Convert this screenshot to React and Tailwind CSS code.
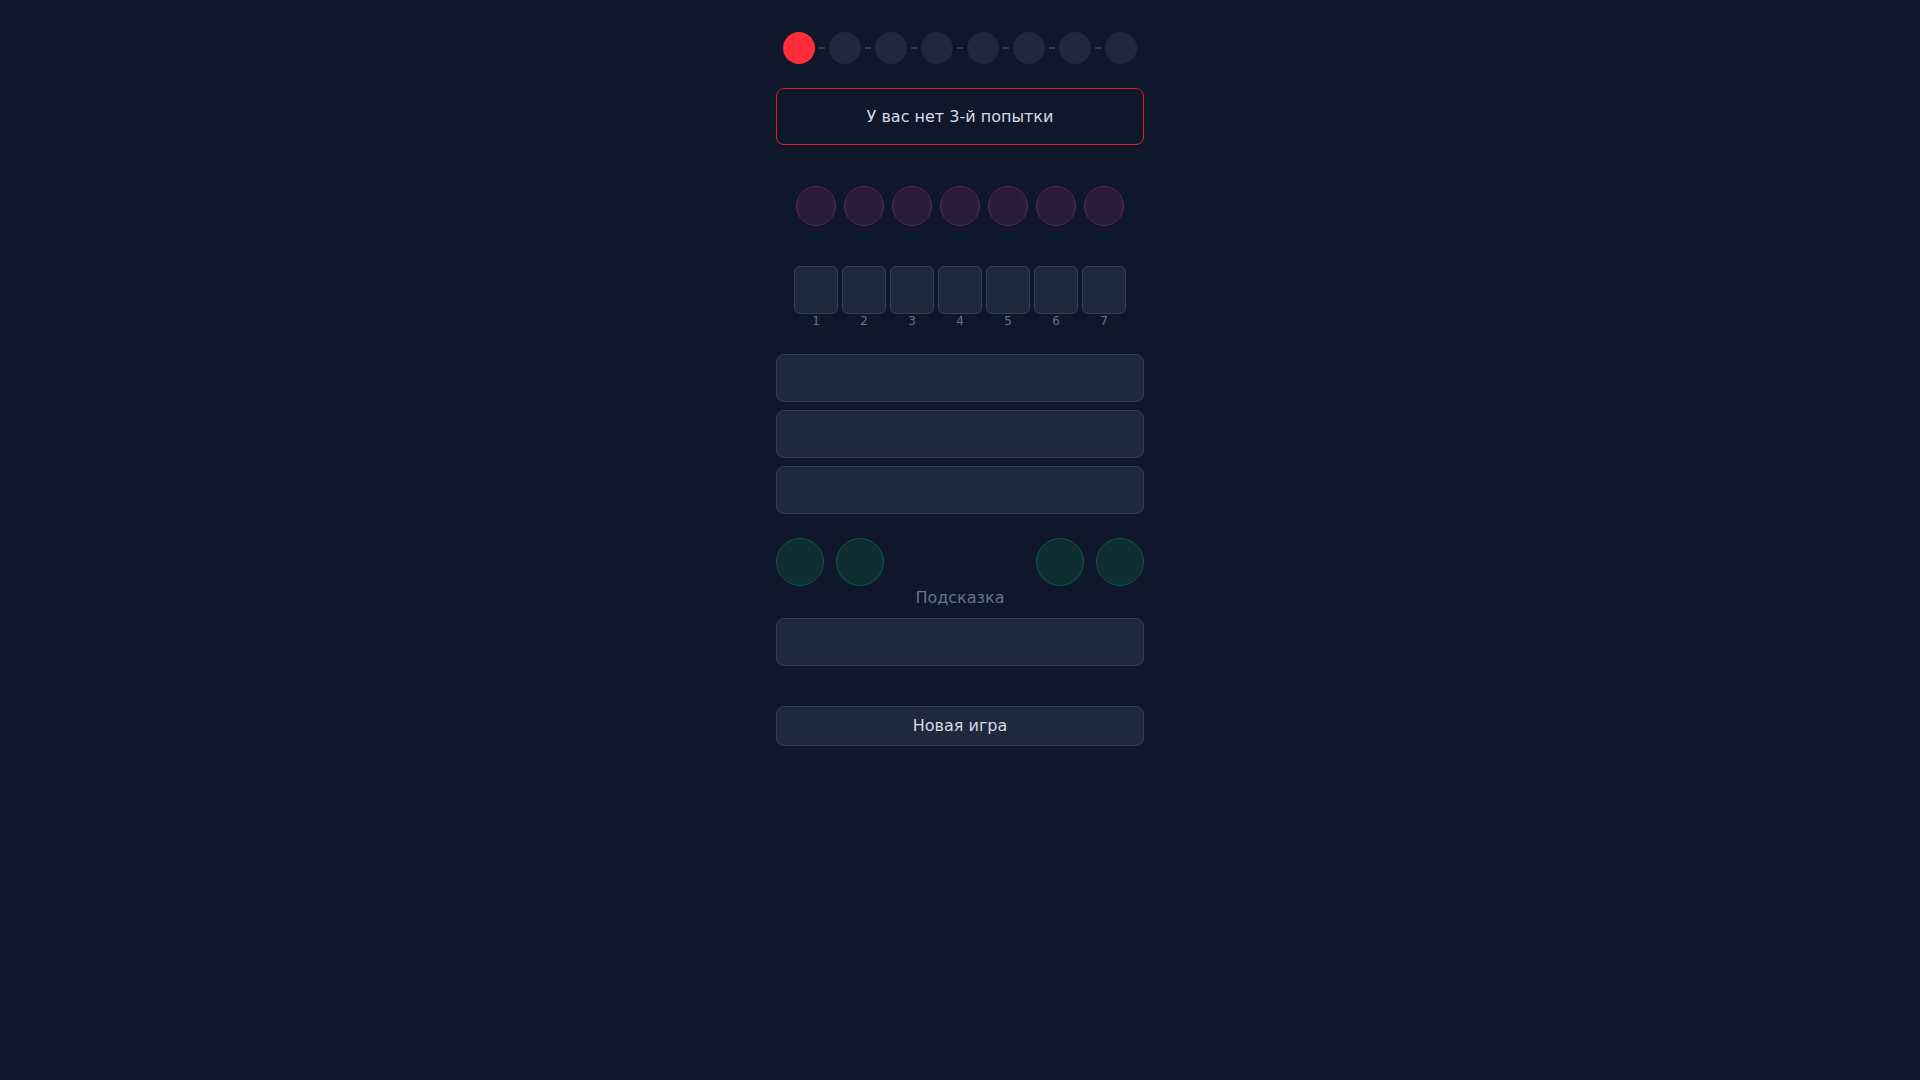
import React from "react";

export default function App() {
  const steps = [0, 1, 2, 3, 4, 5, 6, 7];
  const seven = [1, 2, 3, 4, 5, 6, 7];
  return (
    <div
      className="min-h-screen w-full bg-[#0f172a] text-[#cbd5e1]"
      style={{ fontFamily: '"DejaVu Sans", sans-serif' }}
    >
      <div className="mx-auto flex w-[368px] flex-col pt-8">
        {/* steps */}
        <div className="flex items-center justify-center">
          {steps.map((s, i) => (
            <React.Fragment key={s}>
              {i > 0 && <div className="mx-1 h-[2px] w-1.5 bg-[#334155]" />}
              <div
                className={
                  i === 0
                    ? "h-8 w-8 rounded-full bg-[#ff2d3a]"
                    : "h-8 w-8 rounded-full bg-[#1e293b]"
                }
              />
            </React.Fragment>
          ))}
        </div>

        {/* message */}
        <div className="mt-6 flex h-[57px] items-center justify-center rounded-lg border border-[#e11d2e] text-base text-[#d4dbe5]">
          У вас нет 3-й попытки
        </div>

        {/* purple circles */}
        <div className="mt-[41px] flex justify-center gap-2">
          {seven.map((n) => (
            <div
              key={n}
              className="h-10 w-10 rounded-full border border-[#5b2758] bg-[#2a1d3a]"
            />
          ))}
        </div>

        {/* squares */}
        <div className="mt-10 flex justify-center gap-1">
          {seven.map((n) => (
            <div key={n} className="flex w-11 flex-col items-center">
              <div className="h-12 w-11 rounded-md border border-[#334155] bg-[#1e293b]" />
              <div className="text-xs leading-[14px] text-[#64748b]">{n}</div>
            </div>
          ))}
        </div>

        {/* inputs */}
        <div className="mt-[26px] flex flex-col gap-2">
          <div className="h-12 rounded-lg border border-[#334155] bg-[#1e293b]" />
          <div className="h-12 rounded-lg border border-[#334155] bg-[#1e293b]" />
          <div className="h-12 rounded-lg border border-[#334155] bg-[#1e293b]" />
        </div>

        {/* green circles */}
        <div className="mt-6 flex justify-between">
          <div className="flex gap-3">
            <div className="h-12 w-12 rounded-full border border-[#0b5a45] bg-[#0f2e33]" />
            <div className="h-12 w-12 rounded-full border border-[#0b5a45] bg-[#0f2e33]" />
          </div>
          <div className="flex gap-3">
            <div className="h-12 w-12 rounded-full border border-[#0b5a45] bg-[#0f2e33]" />
            <div className="h-12 w-12 rounded-full border border-[#0b5a45] bg-[#0f2e33]" />
          </div>
        </div>

        <div className="text-center text-base leading-6 text-[#64748b]">Подсказка</div>

        <div className="mt-2 h-12 rounded-lg border border-[#334155] bg-[#1e293b]" />

        <button className="mt-10 h-10 rounded-lg border border-[#334155] bg-[#1e293b] text-base text-[#d4dbe5]">
          Новая игра
        </button>
      </div>
    </div>
  );
}
